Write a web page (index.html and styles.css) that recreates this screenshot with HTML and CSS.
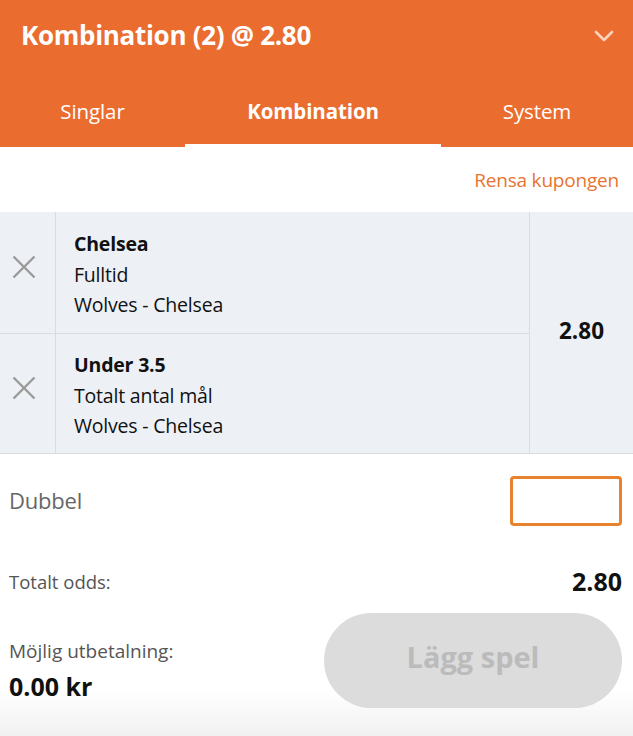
FILE: index.html
```html
<!DOCTYPE html>
<html lang="sv">
<head>
<meta charset="utf-8">
<link rel="stylesheet" href="styles.css">
</head>
<body>
<div class="slip">
  <header class="head">
    <div class="title-row">
      <h1 class="title">Kombination (2) @ 2.80</h1>
      <svg class="chev" width="20" height="12" viewBox="0 0 20 12"><path d="M2 2 L10 10 L18 2" fill="none" stroke="#fbd3bd" stroke-width="2.6" stroke-linecap="round" stroke-linejoin="round"/></svg>
    </div>
    <nav class="tabs">
      <div class="tab t1">Singlar</div>
      <div class="tab t2 active">Kombination</div>
      <div class="tab t3">System</div>
    </nav>
  </header>
  <div class="clear-row"><span class="clear">Rensa kupongen</span></div>
  <section class="bets">
    <div class="bet-list">
      <div class="bet">
        <div class="rm"><svg width="24" height="24" viewBox="0 0 24 24"><path d="M1.5 1.5 L22.5 22.5 M22.5 1.5 L1.5 22.5" stroke="#9a9a9a" stroke-width="2.4"/></svg></div>
        <div class="info">
          <div class="sel">Chelsea</div>
          <div class="mkt">Fulltid</div>
          <div class="evt">Wolves - Chelsea</div>
        </div>
      </div>
      <div class="bet">
        <div class="rm"><svg width="24" height="24" viewBox="0 0 24 24"><path d="M1.5 1.5 L22.5 22.5 M22.5 1.5 L1.5 22.5" stroke="#9a9a9a" stroke-width="2.4"/></svg></div>
        <div class="info">
          <div class="sel">Under 3.5</div>
          <div class="mkt">Totalt antal mål</div>
          <div class="evt">Wolves - Chelsea</div>
        </div>
      </div>
    </div>
    <div class="odds">2.80</div>
  </section>
  <div class="stake-row">
    <span class="stake-label">Dubbel</span>
    <div class="stake-input"></div>
  </div>
  <div class="total-row">
    <span class="lbl">Totalt odds:</span>
    <span class="val">2.80</span>
  </div>
  <div class="pay-row">
    <div class="pay">
      <div class="lbl">Möjlig utbetalning:</div>
      <div class="val">0.00 kr</div>
    </div>
    <button class="place">Lägg spel</button>
  </div>
</div>
</body>
</html>
```
FILE: styles.css
```css
* { box-sizing: border-box; }
html, body { margin: 0; padding: 0; }
body {
  width: 633px;
  height: 736px;
  overflow: hidden;
  font-family: "Open Sans", "Noto Sans", sans-serif;
  color: #111;
  background: #fff;
}
.slip {
  height: 736px;
  background: linear-gradient(to bottom, #fff 0, #fff 690px, #f1f1f1 736px);
}
.head {
  background: #ea6c2f;
  color: #fff;
}
.title-row {
  height: 73px;
  display: flex;
  align-items: center;
  justify-content: space-between;
  padding: 0 20px 4px 21px;
}
.title {
  margin: 0;
  font-size: 26px;
  font-weight: 700;
  letter-spacing: -0.3px;
}
.chev { margin-right: -1px; margin-top: 2px; }
.tabs {
  height: 74px;
  display: flex;
}
.tab {
  display: flex;
  align-items: center;
  justify-content: center;
  font-size: 20.5px;
  letter-spacing: -0.1px;
  border-bottom: 3px solid transparent;
  padding-top: 4px;
}
.t1 { width: 185px; }
.t2 { width: 256px; }
.t3 { flex: 1; }
.tab.active {
  font-weight: 700;
  border-bottom-color: #fff;
}
.clear-row {
  height: 65px;
  display: flex;
  align-items: center;
  justify-content: flex-end;
  padding-right: 14px;
}
.clear {
  color: #e8742f;
  font-size: 19px;
  letter-spacing: -0.2px;
}
.bets {
  display: flex;
  background: #edf0f5;
  border-bottom: 1px solid #d9dde2;
}
.bet-list {
  width: 530px;
  border-right: 1px solid #d9dde2;
}
.bet {
  display: flex;
  height: 121px;
}
.bet + .bet { border-top: 1px solid #d9dde2; height: 120px; }
.rm {
  width: 56px;
  border-right: 1px solid #d9dde2;
  display: flex;
  align-items: center;
  justify-content: center;
  padding: 0 8px 12px 0;
}
.info {
  padding: 17px 0 0 18px;
  font-size: 19.5px;
  line-height: 30.5px;
  letter-spacing: -0.2px;
}
.bet + .bet .info { padding-top: 16px; }
.sel { font-weight: 700; }
.odds {
  flex: 1;
  display: flex;
  align-items: center;
  justify-content: center;
  font-weight: 700;
  font-size: 22.5px;
  padding-bottom: 4px;
}
.stake-row {
  height: 91px;
  display: flex;
  align-items: center;
  justify-content: space-between;
  padding: 0 11px 0 9px;
}
.stake-label {
  font-size: 22px;
  color: #666;
  letter-spacing: -0.2px;
}
.stake-input {
  width: 112px;
  height: 50px;
  border: 3px solid #e9822f;
  border-radius: 4px;
  margin-top: 2px;
}
.total-row {
  height: 44px;
  margin-top: 14px;
  display: flex;
  align-items: center;
  justify-content: space-between;
  padding: 0 11px 0 9px;
}
.total-row .lbl {
  font-size: 18.5px;
  color: #555;
}
.total-row .val {
  font-size: 25px;
  font-weight: 700;
}
.pay-row {
  display: flex;
  align-items: flex-start;
  justify-content: space-between;
  padding: 0 11px 0 9px;
  margin-top: 10px;
}
.pay {
  padding-top: 25px;
}
.pay .lbl {
  font-size: 19px;
  color: #555;
  line-height: 26px;
}
.pay .val {
  font-size: 25px;
  font-weight: 700;
  line-height: 34px;
  margin-top: 5px;
}
.place {
  width: 298px;
  height: 95px;
  border: none;
  border-radius: 48px;
  background: #dcdcdc;
  color: #bbbbbb;
  font-family: inherit;
  font-size: 29px;
  font-weight: 700;
  padding-bottom: 9px;
}
```
